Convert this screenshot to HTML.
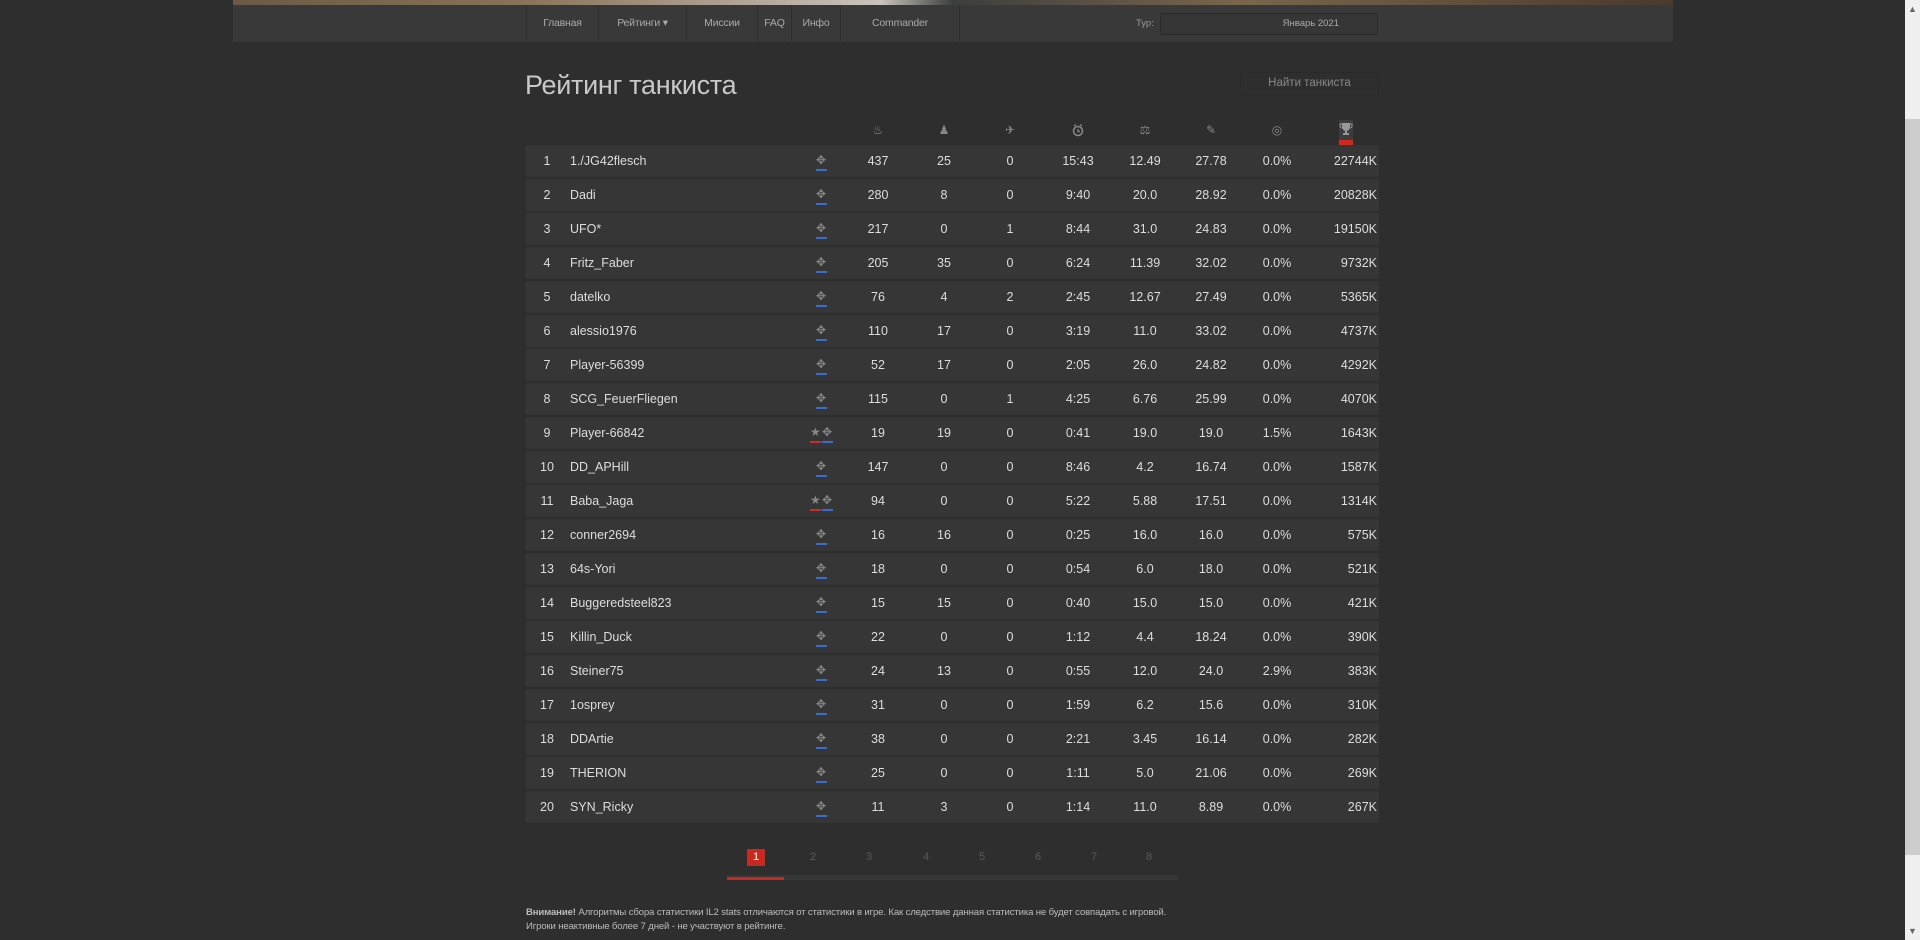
<!DOCTYPE html>
<html><head><meta charset="utf-8"><style>
*{margin:0;padding:0;box-sizing:border-box}
body{width:1920px;height:940px;background:#2e2e2e;font-family:"Liberation Sans","DejaVu Sans",sans-serif;color:#ddd;overflow:hidden;position:relative}
.strip{position:absolute;left:233px;top:0;width:1440px;height:6px;background:linear-gradient(90deg,#6b5a45,#8a7258 20%,#c9c4bc 45%,#3c3f3d 50%,#7a654c 70%,#4a3a2c)}
.nav{position:absolute;left:233px;top:5px;width:1440px;height:37px;background:#393939}
.nav a{position:absolute;top:0;height:37px;line-height:37px;font-size:10.5px;color:#aaa;text-align:center;border-left:1px solid #2e2e2e;letter-spacing:-0.2px}
.sel{position:absolute;left:1160px;top:13px;width:218px;height:22px;border:1px solid #2a2a2a;background:#363636;font-size:9.5px;color:#aaa;line-height:20px;text-align:right;padding-right:38px}
.tur{position:absolute;left:1136px;top:13px;font-size:9.5px;color:#999;line-height:22px}
h1{position:absolute;left:525px;top:70px;font-size:27px;font-weight:normal;color:#c8c8c8;letter-spacing:-0.3px}
.find{position:absolute;left:1240px;top:72px;width:139px;height:23px;border:1px solid #2a2a2a;font-size:11.5px;color:#888;text-align:center;line-height:21px}
.hi{position:absolute;top:123px;width:14px;height:14px;color:#888;font-size:12px;text-align:center;line-height:14px}
.row{position:absolute;left:526px;width:853px;height:32px;background:#363636;font-size:12.5px;line-height:32px}
.row span{position:absolute;top:0;text-align:center}
.ic{position:absolute;top:9px;font-size:12px;color:#888;line-height:12px}
.pg{position:absolute;top:849px;font-size:11px;color:#5a5a5a;width:18px;text-align:center;line-height:17px}
.note{position:absolute;left:526px;top:906px;font-size:9.6px;color:#bbb;line-height:14px;letter-spacing:-0.15px}
.sb{position:absolute;left:1905px;top:0;width:15px;height:940px;background:#f0f0f0}
</style></head><body>
<div class="strip"></div>
<div class="nav">
<a style="left:293px;width:72px">Главная</a>
<a style="left:365px;width:88px">Рейтинги ▾</a>
<a style="left:453px;width:71px">Миссии</a>
<a style="left:524px;width:34px">FAQ</a>
<a style="left:558px;width:49px">Инфо</a>
<a style="left:607px;width:120px;border-right:1px solid #2e2e2e">Commander</a>
</div>
<div class="tur">Тур:</div>
<div class="sel">Январь 2021</div>
<h1>Рейтинг танкиста</h1>
<div class="find">Найти танкиста</div>
<div class="hi" style="left:871px">&#9832;</div>
<div class="hi" style="left:937px">&#9823;</div>
<div class="hi" style="left:1003px">&#9992;</div>
<svg class="hi" style="left:1071px" viewBox="0 0 14 14"><circle cx="7" cy="8" r="4.5" fill="none" stroke="#888" stroke-width="1.5"/><path d="M7 6v2.5h2M3 3l2-1.5M11 3l-2-1.5" stroke="#888" stroke-width="1.2" fill="none"/></svg>
<div class="hi" style="left:1138px">&#9878;</div>
<div class="hi" style="left:1204px">&#9998;</div>
<div class="hi" style="left:1270px">&#9678;</div>
<div style="position:absolute;left:1339px;top:120px;width:14px;height:23px;background:#3c3c3c"></div>
<svg class="hi" style="left:1339px;top:122px" viewBox="0 0 14 14"><path d="M3 1h8v4a4 4 0 0 1-8 0zM6 9h2v2h2v2H4v-2h2z" fill="#999"/><path d="M3 2H1v2a2 2 0 0 0 2 2M11 2h2v2a2 2 0 0 1-2 2" stroke="#999" fill="none"/></svg>
<div style="position:absolute;left:1339px;top:140px;width:14px;height:5px;background:#d02a20"></div>
<div id="rows"></div>
<div style="position:absolute;left:727px;top:875px;width:451px;height:5px;background:#363636"></div>
<div style="position:absolute;left:727px;top:877px;width:57px;height:3px;background:#c8281e"></div>
<div class="pg" style="left:747px;background:#c8281e;color:#fff">1</div>
<div class="pg" style="left:804px">2</div>
<div class="pg" style="left:860px">3</div>
<div class="pg" style="left:917px">4</div>
<div class="pg" style="left:973px">5</div>
<div class="pg" style="left:1029px">6</div>
<div class="pg" style="left:1085px">7</div>
<div class="pg" style="left:1140px">8</div>
<div class="note"><b>Внимание!</b> Алгоритмы сбора статистики IL2 stats отличаются от статистики в игре. Как следствие данная статистика не будет совпадать с игровой.<br>Игроки неактивные более 7 дней - не участвуют в рейтинге.</div>
<div class="sb"><div style="position:absolute;top:119px;left:0;width:15px;height:736px;background:#cdcdcd"></div><div style="position:absolute;top:4px;left:3px;font-size:9px;color:#666">&#9650;</div><div style="position:absolute;bottom:4px;left:3px;font-size:9px;color:#666">&#9660;</div></div>
<script>
var d=[["1./JG42flesch",437,25,0,"15:43","12.49","27.78","0.0%","22744K"],["Dadi",280,8,0,"9:40","20.0","28.92","0.0%","20828K"],["UFO*",217,0,1,"8:44","31.0","24.83","0.0%","19150K"],["Fritz_Faber",205,35,0,"6:24","11.39","32.02","0.0%","9732K"],["datelko",76,4,2,"2:45","12.67","27.49","0.0%","5365K"],["alessio1976",110,17,0,"3:19","11.0","33.02","0.0%","4737K"],["Player-56399",52,17,0,"2:05","26.0","24.82","0.0%","4292K"],["SCG_FeuerFliegen",115,0,1,"4:25","6.76","25.99","0.0%","4070K"],["Player-66842",19,19,0,"0:41","19.0","19.0","1.5%","1643K",1],["DD_APHill",147,0,0,"8:46","4.2","16.74","0.0%","1587K"],["Baba_Jaga",94,0,0,"5:22","5.88","17.51","0.0%","1314K",1],["conner2694",16,16,0,"0:25","16.0","16.0","0.0%","575K"],["64s-Yori",18,0,0,"0:54","6.0","18.0","0.0%","521K"],["Buggeredsteel823",15,15,0,"0:40","15.0","15.0","0.0%","421K"],["Killin_Duck",22,0,0,"1:12","4.4","18.24","0.0%","390K"],["Steiner75",24,13,0,"0:55","12.0","24.0","2.9%","383K"],["1osprey",31,0,0,"1:59","6.2","15.6","0.0%","310K"],["DDArtie",38,0,0,"2:21","3.45","16.14","0.0%","282K"],["THERION",25,0,0,"1:11","5.0","21.06","0.0%","269K"],["SYN_Ricky",11,3,0,"1:14","11.0","8.89","0.0%","267K"]];
var cx=[352,418,484,552,619,685,751],h="";
d.forEach(function(r,i){var t=145+i*34;h+='<div class="row" style="top:'+t+'px"><span style="left:8px;width:26px">'+(i+1)+'</span><span style="left:44px;text-align:left">'+r[0]+'</span>';
if(r[9]){h+='<div class="ic" style="left:284px">&#9733;</div><div style="position:absolute;left:284px;top:24px;width:11px;height:2px;background:#c03030"></div>';}
h+='<div class="ic" style="left:'+(r[9]?296:290)+'px">&#10021;</div><div style="position:absolute;left:'+(r[9]?296:290)+'px;top:24px;width:11px;height:2px;background:#3a6cc8"></div>';
for(var j=0;j<7;j++)h+='<span style="left:'+(cx[j]-30)+'px;width:60px">'+r[j+1]+'</span>';
h+='<span style="right:2px;text-align:right">'+r[8]+'</span></div>';});
document.getElementById("rows").innerHTML=h;
</script>
</body></html>
